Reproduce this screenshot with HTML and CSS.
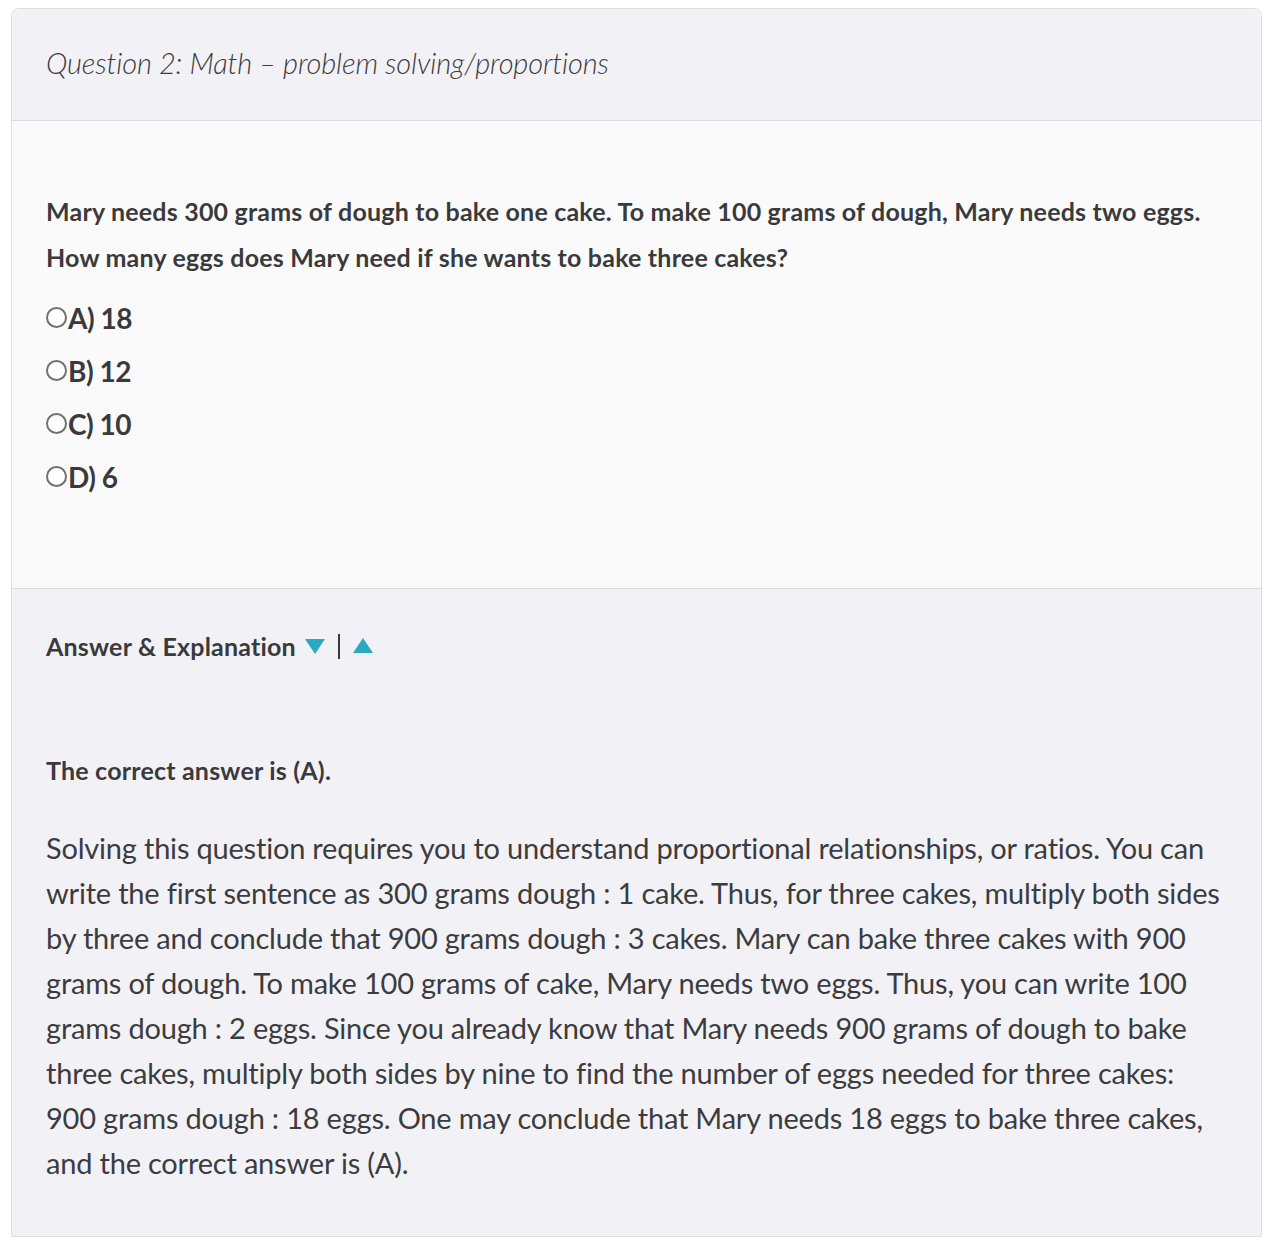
FILE: index.html
```html
<!DOCTYPE html>
<html lang="en">
<head>
<meta charset="utf-8">
<title>Question 2</title>
<link rel="stylesheet" href="styles.css">
</head>
<body>
<div class="card">
  <div class="card-header">
    <h2 class="title">Question 2: Math – problem solving/proportions</h2>
  </div>
  <div class="question">
    <p class="prompt">Mary needs 300 grams of dough to bake one cake. To make 100 grams of dough, Mary needs two eggs. How many eggs does Mary need if she wants to bake three cakes?</p>
    <ul class="options">
      <li class="option"><span class="radio"></span>A) 18</li>
      <li class="option"><span class="radio"></span>B) 12</li>
      <li class="option"><span class="radio"></span>C) 10</li>
      <li class="option"><span class="radio"></span>D) 6</li>
    </ul>
  </div>
  <div class="answer">
    <div class="toggle">
      <span class="toggle-label">Answer &amp; Explanation</span>
      <svg class="tri" width="22" height="18" viewBox="0 0 22 18"><polygon points="1,2 21,2 11,17" fill="#2aa8c4"/></svg>
      <span class="sep"></span>
      <svg class="tri" width="22" height="18" viewBox="0 0 22 18"><polygon points="1,16 21,16 11,1" fill="#2aa8c4"/></svg>
    </div>
    <p class="correct">The correct answer is (A).</p>
    <p class="explain">Solving this question requires you to understand proportional relationships, or ratios. You can write the first sentence as 300 grams dough : 1 cake. Thus, for three cakes, multiply both sides by three and conclude that 900 grams dough : 3 cakes. Mary can bake three cakes with 900 grams of dough. To make 100 grams of cake, Mary needs two eggs. Thus, you can write 100 grams dough : 2 eggs. Since you already know that Mary needs 900 grams of dough to bake three cakes, multiply both sides by nine to find the number of eggs needed for three cakes: 900 grams dough : 18 eggs. One may conclude that Mary needs 18 eggs to bake three cakes, and the correct answer is (A).</p>
  </div>
</div>
</body>
</html>
```

FILE: styles.css
```css
* { box-sizing: border-box; }
html, body { margin: 0; background: #ffffff; }
body {
  padding: 8px 9px 0 11px;
  font-family: Lato, "Open Sans", sans-serif;
  color: #3a3a3c;
}
.card {
  border: 1px solid #dedee2;
  border-radius: 8px 8px 0 0;
  overflow: hidden;
  width: 1251px;
}
.card-header {
  background: #f2f2f6;
  height: 112px;
  border-bottom: 1px solid #dcdcdf;
  padding: 0 34px 4px;
  display: flex;
  align-items: center;
}
.title {
  margin: 0;
  font-size: 29px;
  font-style: italic;
  font-weight: 300;
  letter-spacing: -0.15px;
  color: #3c3c3e;
}
.question {
  background: #fafafa;
  border-bottom: 1px solid #dcdcdf;
  padding: 67px 46px 85px 34px;
}
.prompt {
  margin: 0 0 11px;
  font-size: 25px;
  font-weight: 700;
  line-height: 46px;
  letter-spacing: 0.2px;
}
.options { list-style: none; margin: 0; padding: 0; }
.option {
  display: flex;
  align-items: center;
  height: 53px;
  font-size: 28px;
  font-weight: 700;
  letter-spacing: -0.5px;
}
.radio {
  width: 21px;
  height: 21px;
  border: 2px solid #707070;
  border-radius: 50%;
  background: #ffffff;
  margin-right: 1px;
  flex: none;
}
.answer {
  background: #f2f2f6;
  padding: 39px 40px 40px 34px;
  min-height: 647px;
}
.toggle {
  display: flex;
  align-items: center;
  gap: 8px;
  font-size: 25px;
  font-weight: 700;
  letter-spacing: 0.2px;
  height: 36px;
}
.sep {
  width: 2px;
  height: 25px;
  background: #3a3a3c;
  margin: 0 4px;
}
.correct {
  margin: 91px 0 40px;
  font-size: 25px;
  font-weight: 700;
  letter-spacing: 0.2px;
}
.explain {
  margin: 0;
  font-size: 29px;
  font-weight: 400;
  line-height: 45px;
  letter-spacing: -0.2px;
  color: #3c3c3e;
}
```
